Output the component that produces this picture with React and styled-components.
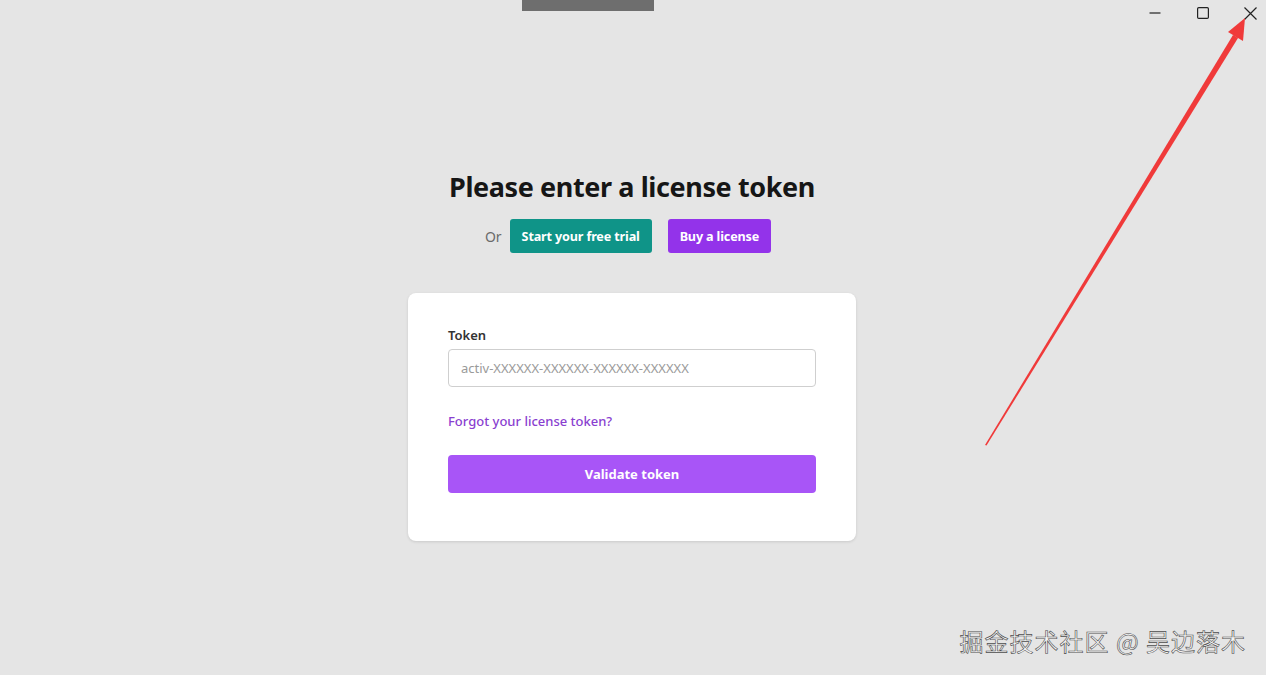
import React from "react";
import styled, { createGlobalStyle } from "styled-components";

const Global = createGlobalStyle`
  html, body { margin: 0; padding: 0; }
  body {
    background: #e5e5e5;
    font-family: "Noto Sans", "Open Sans", sans-serif;
    overflow: hidden;
  }
  * { box-sizing: border-box; }
`;

const Page = styled.div`
  position: relative;
  width: 1266px;
  height: 675px;
  background: #e5e5e5;
  display: flex;
  flex-direction: column;
  align-items: center;
  padding-top: 167px;
  padding-right: 2px;
`;

const DragHandle = styled.div`
  position: absolute;
  left: 522px;
  top: 0;
  width: 132px;
  height: 11px;
  background: #6e6e6e;
`;

const WindowControls = styled.div`
  position: absolute;
  top: 0;
  right: -8px;
  display: flex;
  align-items: center;
  height: 26px;
`;

const ControlButton = styled.div`
  width: 47.5px;
  height: 26px;
  display: flex;
  align-items: center;
  justify-content: center;
  color: #222;
`;

const Title = styled.h1`
  margin: 0;
  font-family: "Noto Sans", sans-serif;
  font-size: 27px;
  font-weight: 700;
  line-height: 40px;
  color: #161616;
  letter-spacing: -0.4px;
`;

const ActionRow = styled.div`
  margin-top: 12px;
  display: flex;
  align-items: center;
  gap: 16px;
  margin-right: 8px;
`;

const OrText = styled.span`
  font-size: 14px;
  color: #6b6b6b;
  margin-right: -8px;
`;

const PillButton = styled.button`
  height: 34px;
  padding: 0 12px;
  border: none;
  border-radius: 3px;
  background: ${(p) => p.$bg};
  color: #fff;
  font-family: "Noto Sans", sans-serif;
  font-size: 12.6px;
  font-weight: 700;
  letter-spacing: -0.15px;
  cursor: pointer;
`;

const Card = styled.div`
  margin-top: 40px;
  width: 448px;
  background: #fff;
  border-radius: 8px;
  box-shadow: 0 1px 3px rgba(0, 0, 0, 0.12);
  padding: 32px 40px 48px;
  display: flex;
  flex-direction: column;
`;

const Label = styled.label`
  font-size: 13px;
  font-weight: 600;
  color: #333;
  line-height: 20px;
`;

const Input = styled.input`
  margin-top: 4px;
  height: 38px;
  width: 100%;
  border: 1px solid #cfcfcf;
  border-radius: 4px;
  padding: 0 12px;
  font-family: "Noto Sans", sans-serif;
  font-size: 13px;
  color: #333;
  outline: none;
  &::placeholder { color: #9a9a9a; }
`;

const Link = styled.a`
  margin-top: 24px;
  font-size: 13px;
  font-weight: 500;
  color: #8a3fd0;
  line-height: 20px;
  text-decoration: none;
  cursor: pointer;
`;

const SubmitButton = styled.button`
  margin-top: 24px;
  height: 38px;
  width: 100%;
  border: none;
  border-radius: 4px;
  background: #a855f7;
  color: #fff;
  font-family: "Noto Sans", sans-serif;
  font-size: 13px;
  font-weight: 700;
  cursor: pointer;
`;

const ArrowOverlay = styled.svg`
  position: absolute;
  left: 0;
  top: 0;
  pointer-events: none;
`;

const Watermark = styled.div`
  position: absolute;
  right: 20px;
  bottom: 17px;
  font-family: "Noto Sans CJK SC", sans-serif;
  font-size: 24px;
  color: #f4f4f4;
  -webkit-text-stroke: 0.6px #4a4a4a;
  letter-spacing: 1px;
  pointer-events: none;
`;

export default function App() {
  return (
    <>
      <Global />
      <Page>
        <DragHandle />
        <WindowControls>
          <ControlButton>
            <svg width="12" height="12" viewBox="0 0 12 12">
              <path d="M0.5 6 H11.5" stroke="#222" strokeWidth="1.2" />
            </svg>
          </ControlButton>
          <ControlButton>
            <svg width="12" height="12" viewBox="0 0 12 12">
              <rect x="0.6" y="0.6" width="10.8" height="10.8" rx="1.2" fill="none" stroke="#222" strokeWidth="1.2" />
            </svg>
          </ControlButton>
          <ControlButton>
            <svg width="13" height="13" viewBox="0 0 13 13">
              <path d="M0.5 0.5 L12.5 12.5 M12.5 0.5 L0.5 12.5" stroke="#222" strokeWidth="1.2" />
            </svg>
          </ControlButton>
        </WindowControls>

        <Title>Please enter a license token</Title>
        <ActionRow>
          <OrText>Or</OrText>
          <PillButton $bg="#0f9488">Start your free trial</PillButton>
          <PillButton $bg="#9333ea">Buy a license</PillButton>
        </ActionRow>

        <Card>
          <Label>Token</Label>
          <Input placeholder="activ-XXXXXX-XXXXXX-XXXXXX-XXXXXX" />
          <Link>Forgot your license token?</Link>
          <SubmitButton>Validate token</SubmitButton>
        </Card>

        <ArrowOverlay width="1266" height="675" viewBox="0 0 1266 675">
          <polygon points="985,445 986.5,445.5 1238,38 1233,35" fill="#f03a3a" />
          <polygon points="1245,18 1228,32 1243,41" fill="#f03a3a" />
          <polygon points="1233,35 1238,38 1243,30 1238,27" fill="#f03a3a" />
        </ArrowOverlay>

        <Watermark>掘金技术社区 @ 吴边落木</Watermark>
      </Page>
    </>
  );
}
